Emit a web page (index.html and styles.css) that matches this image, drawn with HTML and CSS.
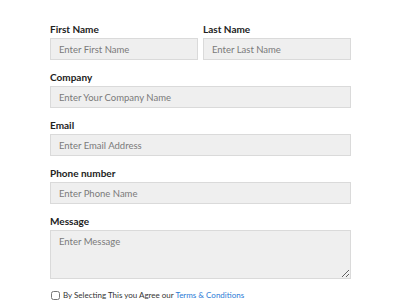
FILE: index.html
```html
<!DOCTYPE html>
<html lang="en">
<head>
    <meta charset="UTF-8">
    <meta name="viewport" content="width=device-width, initial-scale=1.0">
    <title>Contact Form</title>
    <link rel="stylesheet" href="styles.css">
</head>
<body>
    <form class="contact-form">
        <div class="row">
            <div class="field">
                <label>First Name</label>
                <input type="text" placeholder="Enter First Name">
            </div>
            <div class="field">
                <label>Last Name</label>
                <input type="text" placeholder="Enter Last Name">
            </div>
        </div>
        <div class="field">
            <label>Company</label>
            <input type="text" placeholder="Enter Your Company Name">
        </div>
        <div class="field">
            <label>Email</label>
            <input type="text" placeholder="Enter Email Address">
        </div>
        <div class="field">
            <label>Phone number</label>
            <input type="text" placeholder="Enter Phone Name">
        </div>
        <div class="field">
            <label>Message</label>
            <textarea placeholder="Enter Message"></textarea>
        </div>
        <div class="agree">
            <input type="checkbox" id="agree">
            <label for="agree">By Selecting This you Agree our <a href="#">Terms &amp; Conditions</a></label>
        </div>
    </form>
</body>
</html>
```

FILE: styles.css
```css
body {
    font-family: Lato, sans-serif;
    margin: 0;
    padding: 0;
    background: #fff;
}
.contact-form {
    width: 301px;
    margin-left: 50px;
    padding-top: 23px;
}
.row {
    display: flex;
    gap: 5px;
}
.row .field {
    flex: 1;
}
.field {
    display: flex;
    flex-direction: column;
    margin-bottom: 11px;
}
.field label {
    font-size: 10px;
    font-weight: bold;
    line-height: 13px;
    color: #222;
    margin-bottom: 2px;
}
.field input,
.field textarea {
    box-sizing: border-box;
    height: 22px;
    width: 100%;
    margin: 0;
    padding: 0 8px;
    border: 1px solid #dadada;
    background: #efefef;
    font-family: Lato, sans-serif;
    font-size: 9.5px;
    color: #333;
}
.field textarea {
    height: 49px;
    padding: 5px 8px;
    resize: vertical;
}
.field input::placeholder,
.field textarea::placeholder {
    color: #7a7a7a;
}
.agree {
    display: flex;
    align-items: center;
    font-family: Lato, sans-serif;
    font-size: 8px;
    color: #333;
    margin-top: 1px;
}
.agree input {
    width: 9px;
    height: 9px;
    margin: 0 3px 0 1px;
}
.agree a {
    color: #2a7ad6;
    text-decoration: none;
}
```
